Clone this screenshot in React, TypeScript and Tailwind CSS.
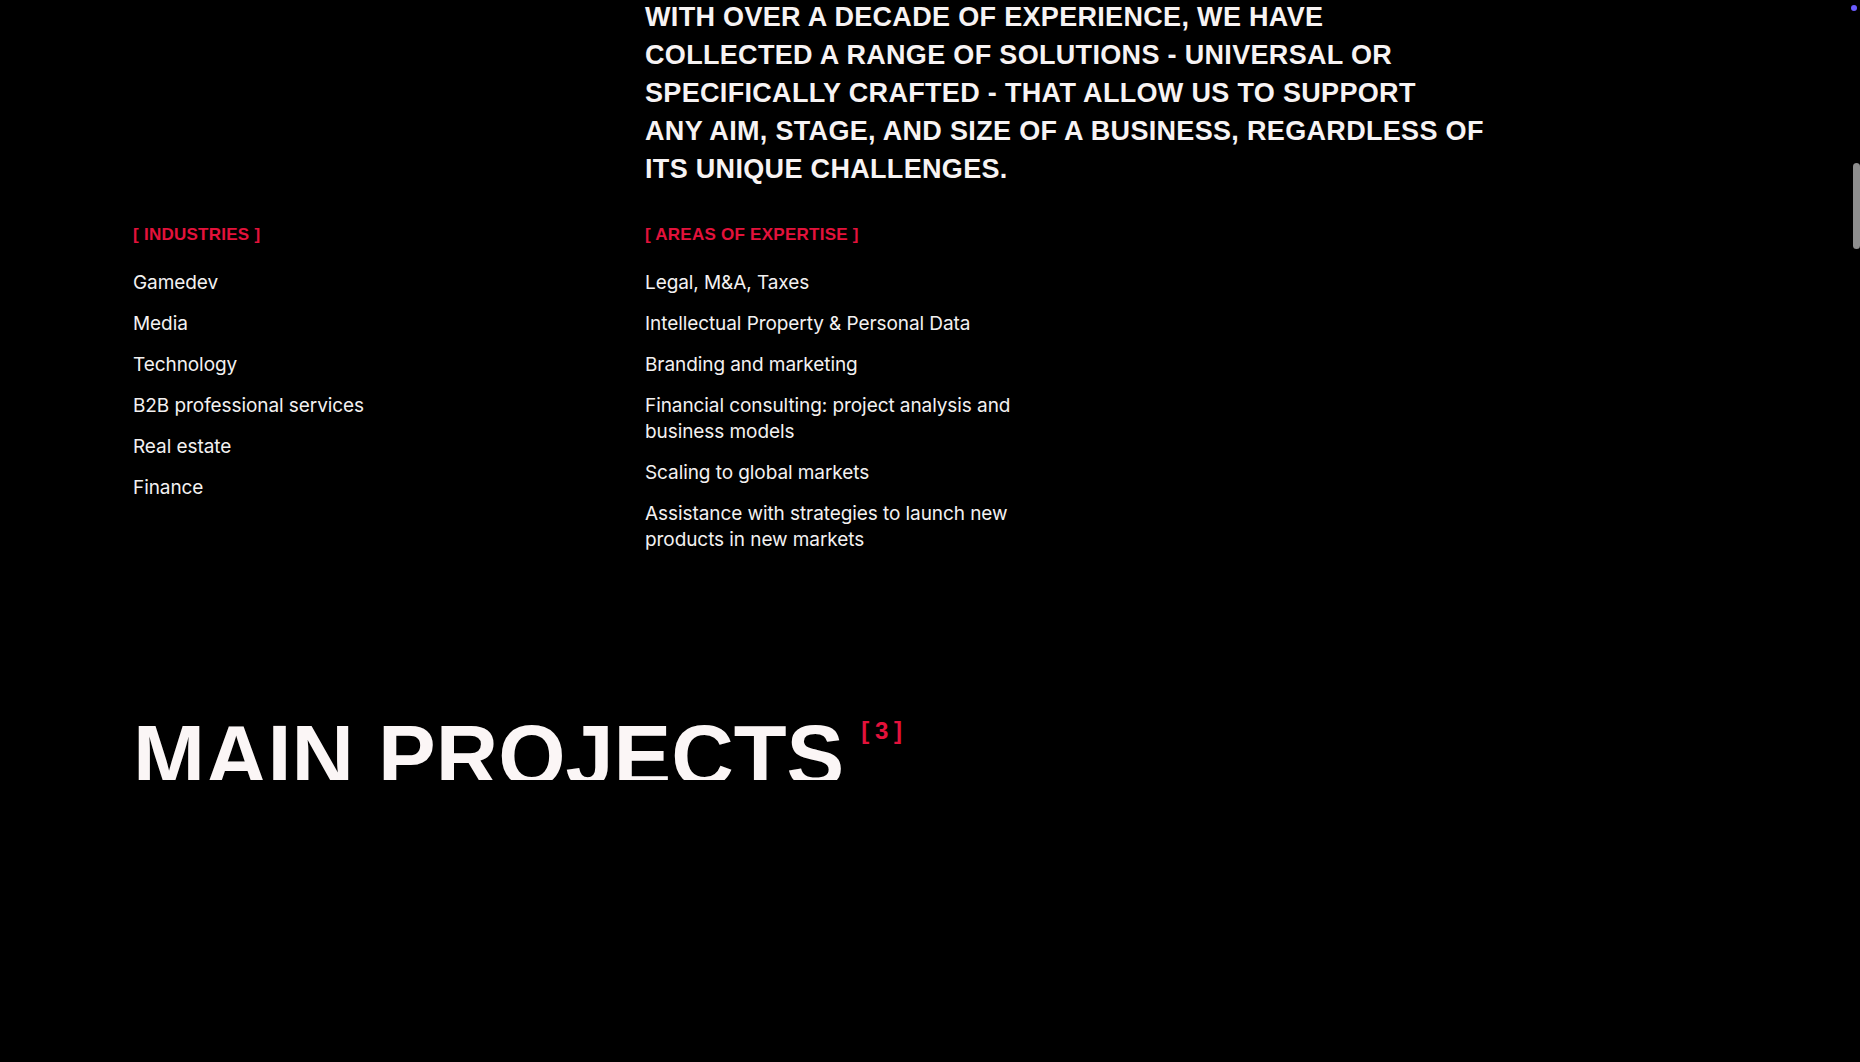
import React from "react";

const industries = [
  "Gamedev",
  "Media",
  "Technology",
  "B2B professional services",
  "Real estate",
  "Finance",
];

const expertise = [
  "Legal, M&A, Taxes",
  "Intellectual Property & Personal Data",
  "Branding and marketing",
  "Financial consulting: project analysis and business models",
  "Scaling to global markets",
  "Assistance with strategies to launch new products in new markets",
];

function Label({ children }: { children: React.ReactNode }) {
  return (
    <div className="text-[17px] leading-[24px] font-bold uppercase text-[#e3123b] font-['Liberation_Sans',Arial,sans-serif] tracking-[0.015em]">
      [ {children} ]
    </div>
  );
}

function List({ items, width }: { items: string[]; width: string }) {
  return (
    <ul className={`mt-[23px] flex flex-col gap-[15px] ${width}`}>
      {items.map((t) => (
        <li
          key={t}
          className="text-[19px] leading-[26px] text-[#f3f1f1] font-['Inter',sans-serif] tracking-[-0.004em]"
        >
          {t}
        </li>
      ))}
    </ul>
  );
}

export default function App() {
  return (
    <div className="relative h-[1062px] w-full overflow-hidden bg-black">
      <div className="pl-[133px]">
        <div className="pl-[512px] -mt-[2px]">
          <p className="w-[840px] text-[27px] leading-[38px] font-bold uppercase text-[#f7f3f3] font-['Liberation_Sans',Arial,sans-serif] tracking-[0.012em]">
            With over a decade of experience, we have
            <br />
            collected a range of solutions - universal or
            <br />
            specifically crafted - that allow us to support
            <br />
            any aim, stage, and size of a business, regardless of
            <br />
            its unique challenges.
          </p>
        </div>

        <div className="mt-[35px] flex">
          <div className="w-[512px]">
            <Label>Industries</Label>
            <List items={industries} width="w-[360px]" />
          </div>
          <div>
            <Label>Areas of expertise</Label>
            <List items={expertise} width="w-[380px]" />
          </div>
        </div>

        <div className="mt-[160px] flex items-start">
          <div className="h-[67px] overflow-hidden">
            <h2 className="text-[86.5px] leading-none font-bold uppercase text-[#fbf6f6] font-['Liberation_Sans',Arial,sans-serif]">
              Main Projects
            </h2>
          </div>
          <div className="ml-[17px] mt-[4px] text-[24px] leading-[28px] font-bold text-[#e3123b] font-['Liberation_Sans',Arial,sans-serif] tracking-[-0.02em] whitespace-pre">
            [ 3 ]
          </div>
        </div>
      </div>

      <div className="absolute right-[3px] top-[5px] h-[6px] w-[6px] rounded-full bg-[#6b5cff]" />
      <div className="absolute right-0 top-[163px] h-[86px] w-[7px] rounded-full bg-[#8d8d8d]" />
    </div>
  );
}
